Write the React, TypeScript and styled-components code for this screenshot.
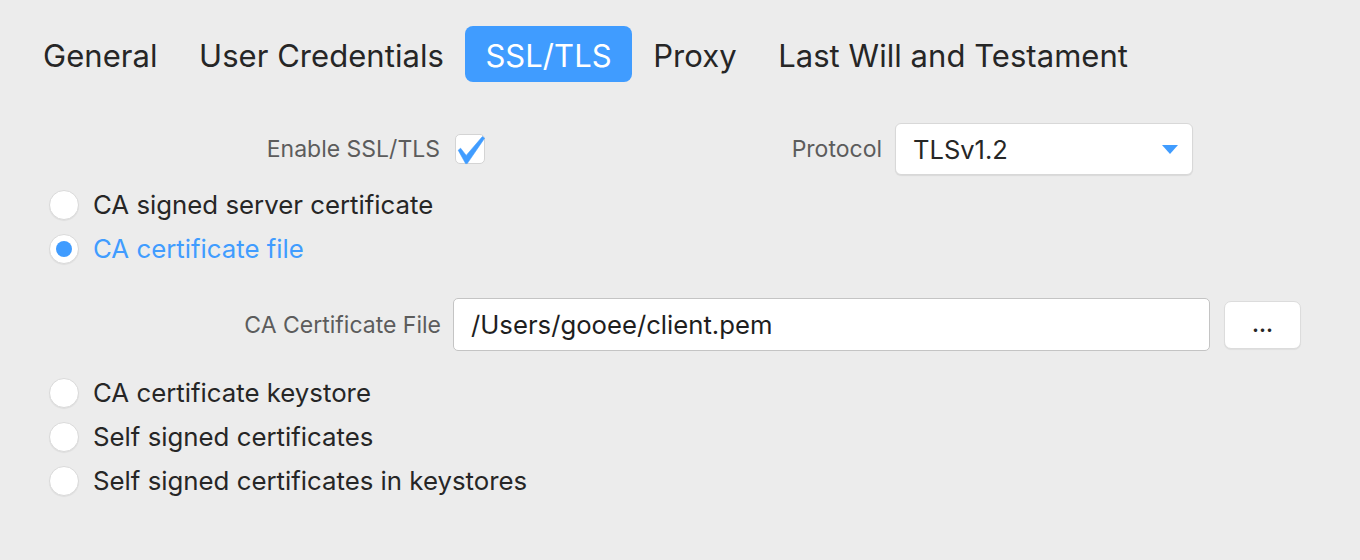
import React from "react";
import styled, { createGlobalStyle } from "styled-components";

const Global = createGlobalStyle`
  html, body { margin: 0; padding: 0; background: #ececec; }
  body { font-family: Inter, "Noto Sans", sans-serif; color: #262626; }
`;

const Page = styled.div`
  width: 1360px;
  height: 560px;
  box-sizing: border-box;
  padding: 26px 0 0 22px;
  display: flex;
  flex-direction: column;
`;

const Tabs = styled.div`
  display: flex;
  align-items: center;
  gap: 1.5px;
  height: 56px;
  padding-left: 1px;
`;

const Tab = styled.div<{ $active?: boolean }>`
  height: 56px;
  display: flex;
  align-items: center;
  padding: 2px 20px 0;
  box-sizing: border-box;
  font-size: 31px;
  letter-spacing: 0.05px;
  border-radius: 8px;
  color: ${(p) => (p.$active ? "#fff" : "#262626")};
  background: ${(p) => (p.$active ? "#409cff" : "transparent")};
`;

const TopRow = styled.div`
  margin-top: 41px;
  height: 52px;
  width: 1171px;
  display: flex;
  align-items: center;
  justify-content: space-between;
`;

const Group = styled.div`
  display: flex;
  align-items: center;
`;

const Label = styled.div<{ $w?: number }>`
  font-size: 23px;
  color: #5c5c5c;
  text-align: right;
  white-space: nowrap;
  width: ${(p) => (p.$w ? `${p.$w}px` : "auto")};
`;

const CheckBox = styled.div`
  width: 30px;
  height: 30px;
  margin-left: 15px;
  box-sizing: border-box;
  background: #fff;
  border: 1px solid #d4d4d4;
  border-radius: 5px;
  position: relative;
`;

const CheckMark = styled.svg`
  position: absolute;
  left: 0;
  top: 0;
`;

const Select = styled.div`
  margin-left: 13px;
  width: 298px;
  height: 52px;
  box-sizing: border-box;
  background: #fff;
  border: 1px solid #d8d8d8;
  border-radius: 6px;
  box-shadow: 0 1px 1px rgba(0, 0, 0, 0.08);
  display: flex;
  align-items: center;
  justify-content: space-between;
  padding: 0 14px 0 17px;
  font-size: 25.5px;
  color: #262626;
`;

const RadioList = styled.div<{ $mt: number }>`
  margin-top: ${(p) => p.$mt}px;
  display: flex;
  flex-direction: column;
  padding-left: 27px;
`;

const RadioRow = styled.div<{ $checked?: boolean }>`
  height: 44px;
  display: flex;
  align-items: center;
  gap: 14px;
  font-size: 25.8px;
  color: ${(p) => (p.$checked ? "#409cff" : "#262626")};
`;

const RadioText = styled.span`
  margin-top: -2px;
`;

const Radio = styled.div<{ $checked?: boolean }>`
  width: 30px;
  height: 30px;
  flex: none;
  box-sizing: border-box;
  border-radius: 50%;
  background: #fff;
  border: 1px solid #dadada;
  box-shadow: 0 1px 1px rgba(0, 0, 0, 0.06);
  display: flex;
  align-items: center;
  justify-content: center;
  &::after {
    content: "";
    display: ${(p) => (p.$checked ? "block" : "none")};
    width: 16px;
    height: 16px;
    border-radius: 50%;
    background: #409cff;
  }
`;

const FileRow = styled.div`
  margin-top: 27px;
  height: 53px;
  display: flex;
  align-items: center;
`;

const TextInput = styled.div`
  margin-left: 12px;
  width: 757px;
  height: 53px;
  box-sizing: border-box;
  background: #fff;
  border: 1px solid #c4c4c4;
  border-radius: 5px;
  display: flex;
  align-items: center;
  padding-left: 17px;
  font-size: 25.7px;
  color: #1e1e1e;
`;

const Button = styled.div`
  margin-left: 14px;
  width: 77px;
  height: 48px;
  box-sizing: border-box;
  background: #fff;
  border: 1px solid #dcdcdc;
  border-radius: 7px;
  box-shadow: 0 1px 1px rgba(0, 0, 0, 0.06);
  display: flex;
  align-items: center;
  justify-content: center;
  font-size: 22px;
  font-weight: 600;
  color: #262626;
  padding-bottom: 2px;
`;

const Check = () => (
  <CheckMark width="30" height="30" viewBox="0 0 30 30">
    <path
      d="M2.2 15.2 L4.6 13.2 L10.2 20.4 L26.4 1.6 L28.6 3.2 L11.2 28.6 L9.6 28.6 Z"
      fill="#409cff"
      strokeLinejoin="round"
      stroke="#409cff"
      strokeWidth="0.6"
    />
  </CheckMark>
);

const Caret = () => (
  <svg width="16" height="9" viewBox="0 0 16 9">
    <path d="M0 0 H16 L8 9 Z" fill="#409cff" />
  </svg>
);

export default function App() {
  return (
    <>
      <Global />
      <Page>
        <Tabs>
          <Tab>General</Tab>
          <Tab>User Credentials</Tab>
          <Tab $active>SSL/TLS</Tab>
          <Tab>Proxy</Tab>
          <Tab>Last Will and Testament</Tab>
        </Tabs>
        <TopRow>
          <Group>
            <Label $w={418}>Enable SSL/TLS</Label>
            <CheckBox>
              <Check />
            </CheckBox>
          </Group>
          <Group>
            <Label>Protocol</Label>
            <Select>
              <span>TLSv1.2</span>
              <Caret />
            </Select>
          </Group>
        </TopRow>
        <RadioList $mt={8}>
          <RadioRow>
            <Radio />
            <RadioText>CA signed server certificate</RadioText>
          </RadioRow>
          <RadioRow $checked>
            <Radio $checked />
            <RadioText>CA certificate file</RadioText>
          </RadioRow>
        </RadioList>
        <FileRow>
          <Label $w={419}>CA Certificate File</Label>
          <TextInput>/Users/gooee/client.pem</TextInput>
          <Button>...</Button>
        </FileRow>
        <RadioList $mt={20}>
          <RadioRow>
            <Radio />
            <RadioText>CA certificate keystore</RadioText>
          </RadioRow>
          <RadioRow>
            <Radio />
            <RadioText>Self signed certificates</RadioText>
          </RadioRow>
          <RadioRow>
            <Radio />
            <RadioText>Self signed certificates in keystores</RadioText>
          </RadioRow>
        </RadioList>
      </Page>
    </>
  );
}
